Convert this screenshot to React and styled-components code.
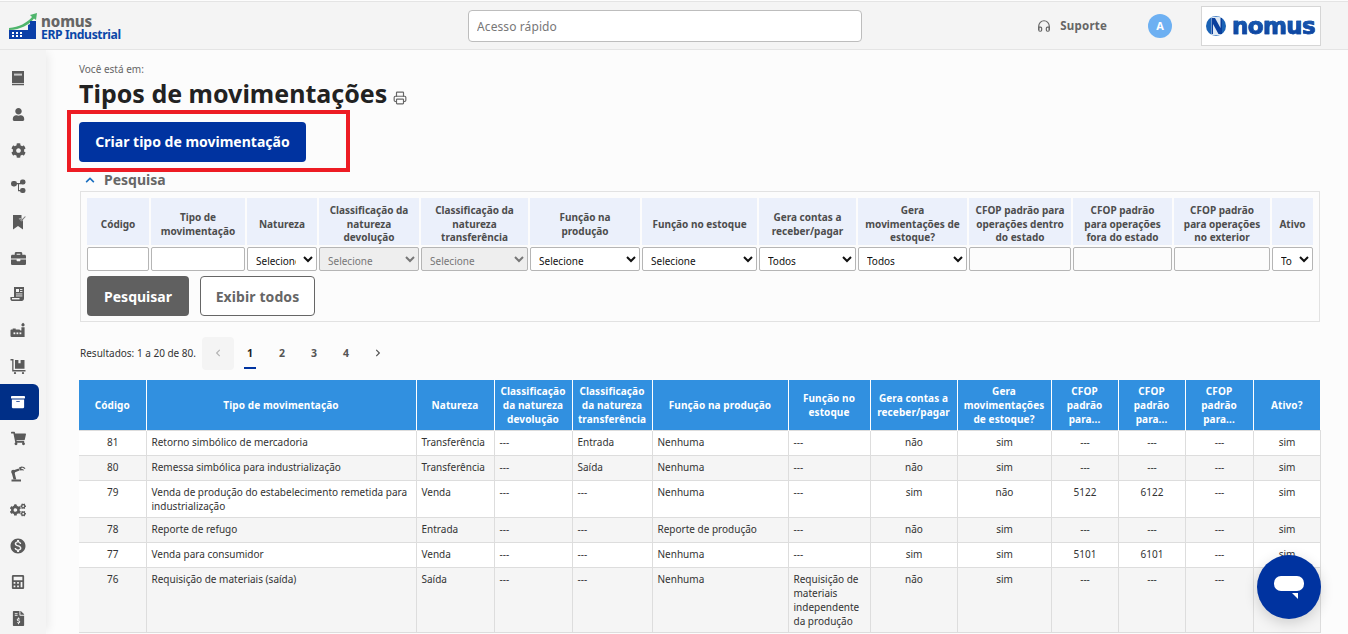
import React from "react";
import styled, { createGlobalStyle } from "styled-components";
import { FaUser, FaCog, FaArchive, FaShoppingCart, FaCogs, FaCalculator, FaFileInvoiceDollar, FaBriefcase, FaChevronLeft, FaChevronRight, FaChevronUp } from "react-icons/fa";
import { MdMonetizationOn } from "react-icons/md";
import { FiHeadphones } from "react-icons/fi";
import { Printer } from "lucide-react";

const Global = createGlobalStyle`
  html, body { margin: 0; padding: 0; height: 634px; overflow: hidden; background: #fcfcfc; }
  body { font-family: "Noto Sans", "Open Sans", sans-serif; color: #222; }
  * { box-sizing: border-box; }
`;

const Page = styled.div`display: flex; flex-direction: column; width: 1348px; height: 634px; overflow: hidden;`;
const TopBar = styled.header`
  flex: 0 0 49px; margin-top: 1px; background: #f4f4f4;
  border-top: 1px solid #e4e4e4; border-bottom: 1px solid #e4e4e4;
  display: flex; align-items: center; position: relative; z-index: 3;
`;
const Brand = styled.div`width: 468px; padding-left: 9px; display: flex; align-items: center; gap: 4px; margin-top: 1px;`;
const BrandText = styled.div`display: flex; flex-direction: column; margin-top: 3px;`;
const BrandName = styled.span`font: 800 15px/13px "Noto Sans", sans-serif; color: #666; letter-spacing: -0.1px;`;
const BrandSub = styled.span`font: 700 12.2px/13px "Noto Sans", sans-serif; color: #0b47a8; letter-spacing: -0.4px;`;
const QuickSearch = styled.input`
  width: 394px; height: 32px; border: 1px solid #bdbdbd; border-radius: 4px; background: #fff;
  padding: 0 8px; font: 12px "Noto Sans", sans-serif; letter-spacing: 0.1px; margin-top: 1px;
  &::placeholder { color: #777; opacity: 1; }
`;
const TopRight = styled.div`margin-left: auto; display: flex; align-items: center; padding-right: 27px;`;
const Support = styled.div`display: flex; align-items: center; gap: 9px; font-weight: 700; font-size: 11.5px; color: #666; letter-spacing: 0.2px; margin-right: 41px;`;
const Avatar = styled.div`width: 24px; height: 24px; border-radius: 50%; background: #6db0f2; color: #fff; display: grid; place-items: center; font-size: 11px; font-weight: 700; margin-right: 29px;`;
const LogoBox = styled.div`width: 120px; height: 40px; margin-top: 1px; background: #fff; border: 1px solid #d6d6d6; display: flex; align-items: center; gap: 6px; padding-left: 4px;`;
const LogoWord = styled.span`
  font: 700 23px/1 "DejaVu Sans", sans-serif; letter-spacing: -0.6px; -webkit-text-stroke: 0.6px #0d4aa5;
  background: linear-gradient(#1b62b8, #0b3f9c); -webkit-background-clip: text; background-clip: text; color: transparent;
`;

const Body = styled.div`flex: 1; display: flex; min-height: 0;`;
const Sidebar = styled.nav`
  flex: 0 0 46px; background: #f4f4f4; padding-top: 10px; display: flex; flex-direction: column;
  box-shadow: 5px 0 9px -3px rgba(0,0,0,.08); position: relative; z-index: 2;
`;
const SideItem = styled.div`
  flex: 0 0 36px; width: 39px; padding-right: 3px; display: grid; place-items: center; border-radius: ${p => (p.$active ? "0 6px 6px 0" : "0")};
  background: ${p => (p.$active ? "#002f87" : "transparent")}; color: ${p => (p.$active ? "#fff" : "#5a5a5a")};
`;

const Main = styled.main`flex: 1; min-width: 0; padding: 12px 28px 0 33px;`;
const Crumb = styled.div`font-size: 10px; line-height: 14px; color: #666;`;
const TitleRow = styled.div`display: flex; align-items: flex-end; gap: 6px; margin-top: 1px;`;
const Title = styled.h1`margin: 0; font-size: 25px; line-height: 32px; font-weight: 700; color: #222;`;
const PrintIcon = styled.span`color: #666; display: flex; padding-bottom: 4px;`;
const ActionRow = styled.div`position: relative; width: 227px; margin-top: 13px;`;
const Highlight = styled.div`position: absolute; left: -12px; top: -12px; width: 283px; height: 62px; border: 4px solid #ed1c24; pointer-events: none;`;
const CreateBtn = styled.button`
  display: block; width: 227px; height: 40px; border: 0; border-radius: 4px; background: #0033a0; color: #fff;
  font: 700 14px "Noto Sans", sans-serif; padding: 0 0 1px;
`;
const SearchHead = styled.div`display: flex; align-items: center; height: 19px; margin: 8px 0 2px; padding-left: 6px; gap: 9px; color: #666; font-size: 14px; font-weight: 700;`;
const ChevronBlue = styled.span`color: #1a6fc0; display: flex;`;
const SearchBox = styled.section`width: 1240px; height: 131px; margin-left: 1px; border: 1px solid #e2e2e2; padding: 4px;`;
const SearchTable = styled.table`border-collapse: separate; border-spacing: 2px; table-layout: fixed; width: 1230px;`;
const SearchTh = styled.th`
  height: 47px; padding: 6px 6px 0; background: #ebf0fb; color: #4d4d4d; font-size: 10px; line-height: 13.6px; font-weight: 700; text-align: center;
`;
const SearchTd = styled.td`padding: 0; height: 24px;`;
const TextInput = styled.input`display: block; width: 100%; height: 24px; background: ${p => (p.$white ? "#fff" : "#fcfcfc")}; border: 1px solid #b5b5b5; border-radius: 2px; padding: 0 4px;`;
const Select = styled.select`
  display: block; width: 100%; height: 24px; background: ${p => (p.disabled ? "#eee" : "#fff")}; color: ${p => (p.disabled ? "#777" : "#111")};
  border: 1px solid #b5b5b5; border-radius: 2px; padding: 3px 4px 0; font: 10px "Noto Sans", sans-serif; opacity: 1;
`;
const SearchActions = styled.div`display: flex; gap: 11px; margin: 3px 0 0 2px;`;
const SearchBtn = styled.button`
  width: 102px; height: 40px; border: 0; border-radius: 4px; background: #606060; color: #fff; font: 700 14px "Noto Sans", sans-serif; padding: 0;
`;
const ShowAllBtn = styled.button`
  width: 115px; height: 40px; border: 1px solid #666; border-radius: 4px; background: #fff; color: #666; font: 700 14px "Noto Sans", sans-serif; letter-spacing: 0.1px; padding: 0;
`;

const PagerRow = styled.div`display: flex; align-items: center; height: 34px; margin-top: 14px;`;
const ResultText = styled.span`font-size: 10px; color: #333; width: 123px; padding-left: 1px;`;
const PrevBox = styled.div`width: 32px; height: 33px; border-radius: 4px; background: #f4f4f4; color: #b4b4b4; display: grid; place-items: center;`;
const PageNum = styled.div`
  width: 32px; height: 33px; display: grid; place-items: center; position: relative; font-size: 10.5px; font-weight: 700;
  color: ${p => (p.$active ? "#222" : "#555")};
  &::after { content: ""; display: ${p => (p.$active ? "block" : "none")}; position: absolute; left: 10px; bottom: 1px; width: 12px; height: 2px; background: #0033a0; }
`;
const DataWrap = styled.div`margin-top: 10px; width: 1241px;`;
const DataTable = styled.table`border-collapse: collapse; table-layout: fixed; width: 1241px;`;
const Th = styled.th`
  height: 50px; padding: 0 4px; background: #3190e0; color: #fff; font-size: 10px; line-height: 14px; font-weight: 700; text-align: center;
  border-left: 1px solid #fff; &:first-child { border-left: 0; } letter-spacing: 0.1px;
`;
const Row = styled.tr`background: ${p => (p.$odd ? "#fff" : "#f5f5f5")};`;
const Td = styled.td`
  height: 25px; padding: 4px 4px 4px 5px; vertical-align: top; font-size: 10px; line-height: 14px; color: #333; border: 1px solid #ddd;
  text-align: ${p => (p.$center ? "center" : "left")};
  &:first-child { border-left: 0; }
`;
const Chat = styled.button`
  position: fixed; left: 1257px; top: 555px; width: 64px; height: 64px; border-radius: 50%; border: 0; background: #0033a0;
  box-shadow: 0 4px 14px rgba(0,0,0,.16); display: grid; place-items: center; padding: 0; z-index: 5;
`;

const Ico = ({ children, w = 16, h = 16, vb = "0 0 16 16" }) => (
  <svg width={w} height={h} viewBox={vb} fill="currentColor">{children}</svg>
);

const BrandLogo = () => (
  <svg width="28" height="28" viewBox="0 0 28 28">
    <path d="M0 16 C10 15 18 11 23 5 L21 3 L28 1 L27 8 L25 6.5 C20 13 12 17.5 0 18 Z" fill="#4fb56c" />
    <path d="M0 18 H19 V13 L21 12 V9 H27 V27 H0 Z" fill="#0b3fa8" />
    <g fill="#fff">
      <rect x="3" y="20" width="2" height="2" /><rect x="7" y="20" width="2" height="2" /><rect x="11" y="20" width="2" height="2" />
      <rect x="3" y="23" width="2" height="2" /><rect x="7" y="23" width="2" height="2" /><rect x="11" y="23" width="2" height="2" />
    </g>
  </svg>
);
const NomusMark = () => (
  <svg width="20" height="20" viewBox="0 0 20 20">
    <circle cx="10" cy="10" r="10" fill="#1a63b6" />
    <path d="M5 1.5 C7 0.5 13 0.5 15 1.5 V18.5 C13 19.5 7 19.5 5 18.5Z" fill="#dfe9f4" />
    <path d="M5.5 2 H9 L14.5 12 V2 H16 V18 H12.5 L7 8 V18 H5.5Z" fill="#0b3f9c" />
  </svg>
);

const BookIcon = () => <Ico><path d="M2 1h12v12.3H2zM2 14h12v1.2H2z" /><rect x="4" y="3.6" width="8" height="2" fill="#c9c9c9" /></Ico>;
const TreeIcon = () => <Ico><rect x="1" y="3" width="6" height="5.4" rx="2.4" /><rect x="10" y="1.5" width="5.5" height="5" rx="2.2" /><rect x="10" y="10" width="5.5" height="5" rx="2.2" /><path d="M6 5h5v1.2H9V12h2v1.2H8V6.2H6z" /></Ico>;
const BookmarkCheck = () => <Ico><path d="M3 1h8.5v4h1.5v10.6l-5-3.6-5 3.6z" /><path d="M10 4l1.6 1.6L15 2l.8.7-4.2 4.5L9.3 4.8z" stroke="#f4f4f4" strokeWidth=".5" /></Ico>;
const ReceiptIcon = () => <Ico><path d="M4 1h10v11.5c0 1.4-1 2.5-2.2 2.5H2c-1 0-1.6-.9-1.6-1.9V11H4z" /><g fill="#f4f4f4"><rect x="6" y="3" width="3" height="3" /><rect x="10" y="3" width="2.4" height=".9" /><rect x="10" y="5" width="2.4" height=".9" /><rect x="6" y="7.5" width="6.4" height=".9" /><rect x="6" y="9.5" width="6.4" height=".9" /><rect x="2" y="12" width="7.5" height="1.4" /></g></Ico>;
const FactoryIcon = () => <Ico><path d="M13 0.8c1 .7 1.6 1.2 1.6 2.2 0 .9-.7 1.4-1.6 1.4s-1.6-.5-1.6-1.4c0-.9.9-1.3 1.6-2.2zM11.4 5.2h3.2V15H1.5C.7 15 .5 14.4.5 13.8V8.6c0-.6.4-1 1-1h1.2V6.4h3V7.6H9c.7 0 1.2.2 1.4.8l1 .2z" /><g fill="#f4f4f4"><rect x="3.5" y="10.4" width="1.8" height="1.8" /><rect x="6.5" y="10.4" width="1.8" height="1.8" /><rect x="9.5" y="10.4" width="1.8" height="1.8" /></g></Ico>;
const DollyIcon = () => <Ico><path d="M0.5 1H3.5V12H15.5V13.4H2.2V2.4H.5z" /><path d="M5 2h3.4v3.3h2.2V2H14.5v8.8H5z" /><circle cx="5" cy="15" r="1.1" /><circle cx="13" cy="15" r="1.1" /></Ico>;
const RobotIcon = () => (
  <Ico>
    <path d="M1.5 15.5v-2h9.5v2z" />
    <path d="M3.5 13.5 1.6 6.4 3 4.6l5.6-2 .9 2-5 2 1.8 6.9z" />
    <circle cx="3.2" cy="5.8" r="2" />
    <path d="M9 1.6 11.6.4c1.8 0 3.2.7 3.9 2l-1.1.6c-.6-.9-1.5-1.3-2.5-1.3l-.9.5.9.9c.8-.1 1.5.2 2 .8l-.7.9c-.6-.5-1.3-.6-2-.4L9.6 4.2z" />
  </Ico>
);

const sideIcons = [
  <BookIcon />, <FaUser size={13} />, <FaCog size={15} />, <TreeIcon />, <BookmarkCheck />, <FaBriefcase size={15} />,
  <ReceiptIcon />, <FactoryIcon />, <DollyIcon />, <FaArchive size={14} />, <FaShoppingCart size={15} />, <RobotIcon />,
  <FaCogs size={16} />, <MdMonetizationOn size={18} />, <FaCalculator size={14} />, <FaFileInvoiceDollar size={15} />,
];

const searchCols = [62, 94, 70, 100, 107, 110, 115, 97, 109, 102, 99, 96, 41];
const searchHeads = ["Código", "Tipo de movimentação", "Natureza", "Classificação da natureza devolução", "Classificação da natureza transferência", "Função na produção", "Função no estoque", "Gera contas a receber/pagar", "Gera movimentações de estoque?", "CFOP padrão para operações dentro do estado", "CFOP padrão para operações fora do estado", "CFOP padrão para operações no exterior", "Ativo"];
const searchInputs = [
  { t: "i", w: true }, { t: "i", w: true }, { t: "s", v: "Selecione" }, { t: "s", v: "Selecione", d: true }, { t: "s", v: "Selecione", d: true },
  { t: "s", v: "Selecione" }, { t: "s", v: "Selecione" }, { t: "s", v: "Todos" }, { t: "s", v: "Todos" }, { t: "i" }, { t: "i" }, { t: "i" }, { t: "s", v: "Todos" },
];

const cols = [67, 270, 78, 78, 80, 136, 82, 87, 94, 67, 67, 68, 67];
const heads = ["Código", "Tipo de movimentação", "Natureza", "Classificação da natureza devolução", "Classificação da natureza transferência", "Função na produção", "Função no estoque", "Gera contas a receber/pagar", "Gera movimentações de estoque?", "CFOP padrão para...", "CFOP padrão para...", "CFOP padrão para...", "Ativo?"];
const centered = [true, false, false, false, false, false, false, true, true, true, true, true, true];
const rows = [
  ["81", "Retorno simbólico de mercadoria", "Transferência", "---", "Entrada", "Nenhuma", "---", "não", "sim", "---", "---", "---", "sim"],
  ["80", "Remessa simbólica para industrialização", "Transferência", "---", "Saída", "Nenhuma", "---", "não", "sim", "---", "---", "---", "sim"],
  ["79", "Venda de produção do estabelecimento remetida para industrialização", "Venda", "---", "---", "Nenhuma", "---", "sim", "não", "5122", "6122", "---", "sim"],
  ["78", "Reporte de refugo", "Entrada", "---", "---", "Reporte de produção", "---", "não", "sim", "---", "---", "---", "sim"],
  ["77", "Venda para consumidor", "Venda", "---", "---", "Nenhuma", "---", "sim", "sim", "5101", "6101", "---", "sim"],
  ["76", "Requisição de materiais (saída)", "Saída", "---", "---", "Nenhuma", "Requisição de materiais independente da produção", "não", "sim", "---", "---", "---", "sim"],
];

export default function App() {
  return (
    <Page>
      <Global />
      <TopBar>
        <Brand>
          <BrandLogo />
          <BrandText>
            <BrandName>nomus</BrandName>
            <BrandSub>ERP Industrial</BrandSub>
          </BrandText>
        </Brand>
        <QuickSearch placeholder="Acesso rápido" />
        <TopRight>
          <Support><FiHeadphones size={14} />Suporte</Support>
          <Avatar>A</Avatar>
          <LogoBox><NomusMark /><LogoWord>nomus</LogoWord></LogoBox>
        </TopRight>
      </TopBar>
      <Body>
        <Sidebar>
          {sideIcons.map((icon, i) => <SideItem key={i} $active={i === 9}>{icon}</SideItem>)}
        </Sidebar>
        <Main>
          <Crumb>Você está em:</Crumb>
          <TitleRow>
            <Title>Tipos de movimentações</Title>
            <PrintIcon><Printer size={14} strokeWidth={2} /></PrintIcon>
          </TitleRow>
          <ActionRow>
            <Highlight />
            <CreateBtn>Criar tipo de movimentação</CreateBtn>
          </ActionRow>
          <SearchHead><ChevronBlue><FaChevronUp size={10} /></ChevronBlue>Pesquisa</SearchHead>
          <SearchBox>
            <SearchTable>
              <colgroup>{searchCols.map((w, i) => <col key={i} width={w} />)}</colgroup>
              <thead><tr>{searchHeads.map((h, i) => <SearchTh key={i}>{h}</SearchTh>)}</tr></thead>
              <tbody>
                <tr>
                  {searchInputs.map((f, i) => (
                    <SearchTd key={i}>
                      {f.t === "i" ? <TextInput $white={f.w} /> : <Select disabled={f.d} defaultValue={f.v}><option>{f.v}</option></Select>}
                    </SearchTd>
                  ))}
                </tr>
              </tbody>
            </SearchTable>
            <SearchActions>
              <SearchBtn>Pesquisar</SearchBtn>
              <ShowAllBtn>Exibir todos</ShowAllBtn>
            </SearchActions>
          </SearchBox>
          <PagerRow>
            <ResultText>Resultados: 1 a 20 de 80.</ResultText>
            <PrevBox><FaChevronLeft size={8} /></PrevBox>
            <PageNum $active>1</PageNum><PageNum>2</PageNum><PageNum>3</PageNum><PageNum>4</PageNum>
            <PageNum><FaChevronRight size={8} /></PageNum>
          </PagerRow>
          <DataWrap>
            <DataTable>
              <colgroup>{cols.map((w, i) => <col key={i} width={w} />)}</colgroup>
              <thead><tr>{heads.map((h, i) => <Th key={i}>{h}</Th>)}</tr></thead>
              <tbody>
                {rows.map((r, i) => (
                  <Row key={i} $odd={i % 2 === 0}>
                    {r.map((c, j) => <Td key={j} $center={centered[j]}>{c}</Td>)}
                  </Row>
                ))}
              </tbody>
            </DataTable>
          </DataWrap>
        </Main>
      </Body>
      <Chat aria-label="Chat">
        <svg width="32" height="26" viewBox="0 0 32 26">
          <rect x="1" y="2" width="30" height="15" rx="7" fill="#fff" />
          <path d="M19 19 H25 V25Z" fill="#fff" />
        </svg>
      </Chat>
    </Page>
  );
}
